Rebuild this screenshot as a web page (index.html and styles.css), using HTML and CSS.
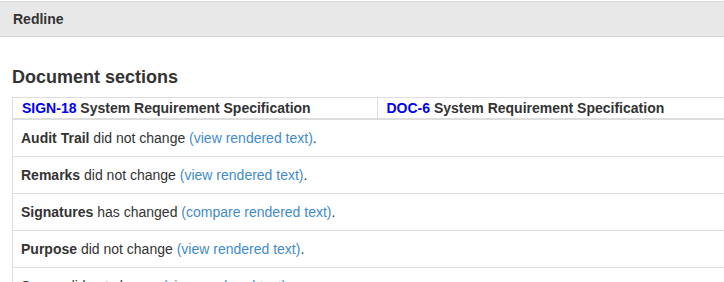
FILE: index.html
```html
<!DOCTYPE html>
<html lang="en">
<head>
<meta charset="utf-8">
<title>Redline</title>
<link rel="stylesheet" href="styles.css">
</head>
<body>
<div class="topbar">Redline</div>
<main class="content">
  <h2 class="title">Document sections</h2>
  <table class="sections">
    <thead>
      <tr>
        <th><a class="doc-link" href="#">SIGN-18</a> System Requirement Specification</th>
        <th><a class="doc-link" href="#">DOC-6</a> System Requirement Specification</th>
      </tr>
    </thead>
    <tbody>
      <tr><td colspan="2"><b>Audit Trail</b> did not change <a class="text-link" href="#">(view rendered text)</a>.</td></tr>
      <tr><td colspan="2"><b>Remarks</b> did not change <a class="text-link" href="#">(view rendered text)</a>.</td></tr>
      <tr><td colspan="2"><b>Signatures</b> has changed <a class="text-link" href="#">(compare rendered text)</a>.</td></tr>
      <tr><td colspan="2"><b>Purpose</b> did not change <a class="text-link" href="#">(view rendered text)</a>.</td></tr>
      <tr><td colspan="2"><b>Scope</b> did not change <a class="text-link" href="#">(view rendered text)</a>.</td></tr>
    </tbody>
  </table>
</main>
</body>
</html>
```

FILE: styles.css
```css
html, body {
  margin: 0;
  padding: 0;
  background: #fff;
  overflow: hidden;
}
body {
  font-family: "Liberation Sans", Arial, Helvetica, sans-serif;
  font-size: 14px;
  line-height: 20px;
  color: #333;
  padding-top: 1px;
}
.topbar {
  background: #e8e8e8;
  border-top: 1px solid #d9d9d9;
  border-bottom: 1px solid #d4d4d4;
  padding: 7px 13px;
  font-weight: bold;
  color: #333;
}
.content {
  padding: 0 0 0 12px;
}
.title {
  margin: 29px 0 9px;
  font-size: 18px;
  line-height: 22px;
  font-weight: bold;
  color: #333;
}
.sections {
  width: 730px;
  border-collapse: collapse;
  border: 1px solid #ddd;
  table-layout: fixed;
}
.sections th {
  text-align: left;
  font-weight: bold;
  padding: 0 9px;
  line-height: 20px;
  border: 1px solid #ddd;
  border-bottom: 2px solid #ddd;
  white-space: nowrap;
}
.sections td {
  padding: 8px;
  line-height: 20px;
  border-top: 1px solid #ddd;
  white-space: nowrap;
}
.doc-link {
  color: #0000ee;
  text-decoration: none;
}
.text-link {
  color: #428bca;
  text-decoration: none;
}
```
